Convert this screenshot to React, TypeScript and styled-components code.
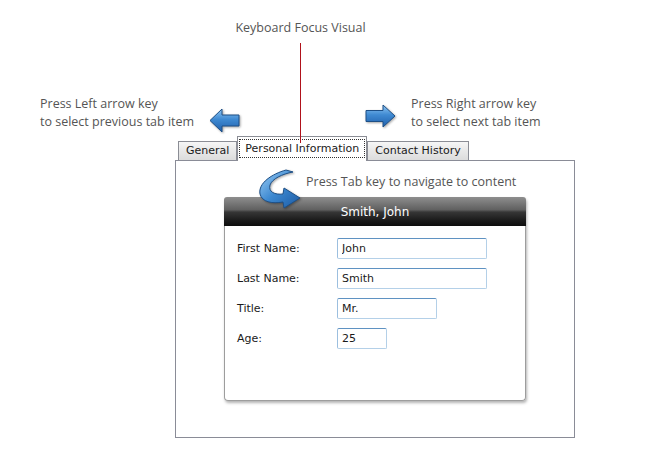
import { Fragment } from "react";
import styled, { createGlobalStyle } from "styled-components";

const GlobalStyle = createGlobalStyle`
  body {
    margin: 0;
    background: #fff;
  }
`;

const Page = styled.div`
  width: 651px;
  height: 469px;
  overflow: hidden;
  background: #fff;
  font-family: "DejaVu Sans", Verdana, sans-serif;
  font-size: 11px;
  font-weight: 400;
  color: #111;
`;

const Annotations = styled.div`
  display: grid;
  grid-template-columns: 236px 129px 1fr;
  height: 136px;
  font-family: "Open Sans", "Liberation Sans", sans-serif;
  font-size: 12.5px;
  line-height: 18px;
  color: #555;
`;

const Hint = styled.div<{ $side: "left" | "right" }>`
  display: flex;
  align-items: flex-start;
  justify-content: ${(p) => (p.$side === "left" ? "space-between" : "flex-start")};
  padding-top: 95px;
  padding-left: ${(p) => (p.$side === "left" ? "40px" : "0")};
  gap: 15px;
`;

const HintText = styled.div`
  white-space: nowrap;
`;

const ArrowIcon = styled.svg<{ $top: number }>`
  flex-shrink: 0;
  margin-top: ${(p) => p.$top}px;
  filter: drop-shadow(1px 1px 1px rgba(0, 0, 0, 0.35));
`;

const FocusColumn = styled.div`
  display: flex;
  flex-direction: column;
  align-items: center;
  padding-top: 19px;
`;

const Caption = styled.div`
  white-space: nowrap;
`;

const FocusLine = styled.div`
  width: 1px;
  height: 100px;
  margin-top: 6px;
  background: #b0121b;
  position: relative;
  z-index: 2;
`;

const TabStrip = styled.div`
  display: flex;
  align-items: flex-end;
  height: 25px;
  margin: 0 0 -1px 178px;
  position: relative;
  z-index: 1;
`;

const Tab = styled.div<{ $selected?: boolean }>`
  box-sizing: border-box;
  border: 1px solid #8b8d95;
  border-bottom: none;
  white-space: nowrap;
  font-weight: 400;
  height: ${(p) => (p.$selected ? "25px" : "19px")};
  margin-bottom: ${(p) => (p.$selected ? "0" : "1px")};
  padding: ${(p) => (p.$selected ? "2px 1px 0" : "0 7px")};
  line-height: 18px;
  background: ${(p) =>
    p.$selected ? "#fff" : "linear-gradient(to bottom, #f6f6f6, #e8e8e8 50%, #dcdcdc)"};
  color: #1a1a1a;
`;

const FocusBox = styled.div`
  border: 1px dotted #333;
  padding: 0 5px;
  line-height: 17px;
`;

const Panel = styled.div`
  box-sizing: border-box;
  margin-left: 175px;
  width: 400px;
  height: 278px;
  border: 1px solid #8a8c97;
`;

const TabHintRow = styled.div`
  display: flex;
  height: 36px;
  padding-left: 81px;
  font-family: "Open Sans", "Liberation Sans", sans-serif;
  font-size: 12.5px;
  line-height: 18px;
  color: #555;
`;

const CurvedArrow = styled.svg`
  flex-shrink: 0;
  margin-top: 8px;
  position: relative;
  z-index: 1;
  filter: drop-shadow(1px 1px 1px rgba(0, 0, 0, 0.35));
`;

const TabHintText = styled.div`
  margin: 12px 0 0 5px;
  white-space: nowrap;
`;

const Card = styled.div`
  margin-left: 48px;
  width: 302px;
  border-radius: 4px;
  box-shadow: 1px 2px 3px rgba(0, 0, 0, 0.3);
`;

const CardHeader = styled.div`
  height: 29px;
  display: flex;
  align-items: center;
  justify-content: center;
  border-radius: 3px 3px 0 0;
  background: linear-gradient(
    to bottom,
    #8e8e8e 0%,
    #606060 44%,
    #363636 52%,
    #1b1b1b 80%,
    #0d0d0d 100%
  );
  color: #fff;
  font-size: 12px;
`;

const CardBody = styled.div`
  box-sizing: border-box;
  height: 175px;
  border: 1px solid #9d9d9d;
  border-top: none;
  border-radius: 0 0 4px 4px;
  background: #fff;
  padding: 12px 0 0 12px;
  display: grid;
  grid-template-columns: 100px auto;
  row-gap: 9px;
  align-content: start;
  align-items: center;
`;

const Label = styled.label`
  color: #1a1a1a;
`;

const Field = styled.input<{ $w: number }>`
  box-sizing: border-box;
  justify-self: start;
  width: ${(p) => p.$w}px;
  height: 21px;
  margin: 0;
  padding: 0 4px;
  border: 1px solid #b4d0e8;
  border-top-color: #5f92c2;
  border-left-color: #9cbfdf;
  border-radius: 2px;
  font-family: inherit;
  font-size: 11px;
  font-weight: 400;
  color: #1a1a1a;
  background: #fff;
  outline: none;
`;

const BlueGradient = ({ id }: { id: string }) => (
  <linearGradient id={id} x1="0" y1="0" x2="0" y2="1">
    <stop offset="0" stopColor="#8fc6f3" />
    <stop offset="0.45" stopColor="#3f8ad2" />
    <stop offset="1" stopColor="#1f5fab" />
  </linearGradient>
);

const LeftArrow = () => (
  <ArrowIcon $top={13} width="31" height="25" viewBox="0 0 31 25">
    <defs>
      <BlueGradient id="gl" />
    </defs>
    <path
      d="M1 12.5 L13 1 L13 7 L30 7 L30 18 L13 18 L13 24 Z"
      fill="url(#gl)"
      stroke="#1d4f86"
      strokeWidth="1"
      strokeLinejoin="round"
    />
  </ArrowIcon>
);

const RightArrow = () => (
  <ArrowIcon $top={9} width="31" height="24" viewBox="0 0 31 24">
    <defs>
      <BlueGradient id="gr" />
    </defs>
    <path
      d="M30 12 L18 1 L18 6.5 L1 6.5 L1 17.5 L18 17.5 L18 23 Z"
      fill="url(#gr)"
      stroke="#1d4f86"
      strokeWidth="1"
      strokeLinejoin="round"
    />
  </ArrowIcon>
);

const TabArrow = () => (
  <CurvedArrow width="44" height="40" viewBox="0 0 44 40">
    <defs>
      <linearGradient id="gc" x1="0" y1="0" x2="1" y2="1">
        <stop offset="0" stopColor="#9fd0f6" />
        <stop offset="0.5" stopColor="#3c88d0" />
        <stop offset="1" stopColor="#1c5aa3" />
      </linearGradient>
    </defs>
    <path
      d="M29 1 C15 5 1 14 3 25 C5 33 15 35 26 33 L27 39 L43 29 L27 19 L26 25 C18 26 11 23 13 16 C15 10 25 5 36 3 Z"
      fill="url(#gc)"
      stroke="#1d4f86"
      strokeWidth="1"
      strokeLinejoin="round"
    />
  </CurvedArrow>
);

const fields = [
  { label: "First Name:", value: "John", width: 150 },
  { label: "Last Name:", value: "Smith", width: 150 },
  { label: "Title:", value: "Mr.", width: 100 },
  { label: "Age:", value: "25", width: 50 },
];

const App = () => {
  return (
    <Page>
      <GlobalStyle />
      <Annotations>
        <Hint $side="left">
          <HintText>
            Press Left arrow key
            <br />
            to select previous tab item
          </HintText>
          <LeftArrow />
        </Hint>
        <FocusColumn>
          <Caption>Keyboard Focus Visual</Caption>
          <FocusLine />
        </FocusColumn>
        <Hint $side="right">
          <RightArrow />
          <HintText>
            Press Right arrow key
            <br />
            to select next tab item
          </HintText>
        </Hint>
      </Annotations>

      <TabStrip>
        <Tab>General</Tab>
        <Tab $selected>
          <FocusBox>Personal Information</FocusBox>
        </Tab>
        <Tab>Contact History</Tab>
      </TabStrip>

      <Panel>
        <TabHintRow>
          <TabArrow />
          <TabHintText>Press Tab key to navigate to content</TabHintText>
        </TabHintRow>
        <Card>
          <CardHeader>Smith, John</CardHeader>
          <CardBody>
            {fields.map((f) => (
              <Fragment key={f.label}>
                <Label>{f.label}</Label>
                <Field $w={f.width} value={f.value} readOnly />
              </Fragment>
            ))}
          </CardBody>
        </Card>
      </Panel>
    </Page>
  );
};

export default App;
